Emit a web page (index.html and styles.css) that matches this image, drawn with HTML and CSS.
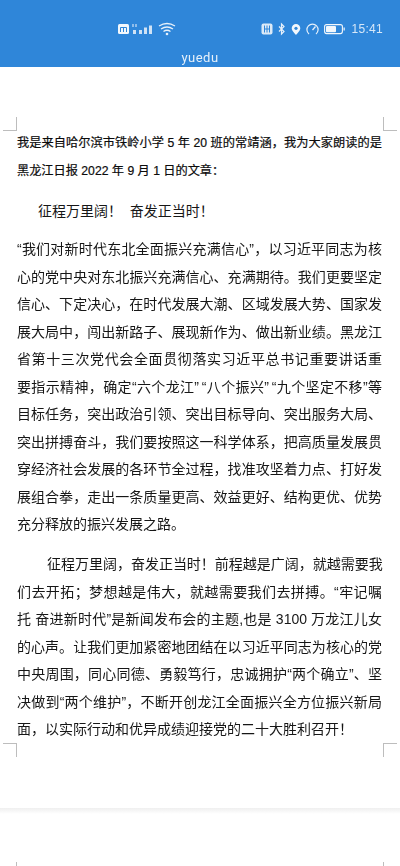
FILE: index.html
```html
<!DOCTYPE html>
<html lang="zh">
<head>
<meta charset="utf-8">
<title>yuedu</title>
<link rel="stylesheet" href="styles.css">
</head>
<body>
<header class="appbar">
  <div class="status">
    <div class="status-left">
      <svg class="ic" width="58" height="14" viewBox="0 0 58 14"><rect x="0" y="2" width="11" height="10" rx="1.500" fill="#f2f7fc"/><path d="M2.500 10V5.500M5.500 10V5.500M8.500 10V5.500M2.500 5.500h6" stroke="#2f86d9" stroke-width="1" fill="none"/><path d="M15 2v3M18 2v3" stroke="#cfe2f5" stroke-width="1.200"/><path d="M15 8h3v4h-3zM21 8h3v4h-3zM26 5.500h3V12h-3zM31 3.500h3V12h-3z" fill="#cfe2f5"/><path d="M41 4q8-5 16 0M43 7q6-4 12 0M45.500 9.500q3.500-2.500 7 0" stroke="#e6f0fa" stroke-width="1.300" fill="none"/><circle cx="49" cy="12" r="1.300" fill="#e6f0fa"/></svg>
    </div>
    <div class="status-right">
      <svg class="ic" width="12" height="14" viewBox="0 0 12 14"><rect x=".5" y="1.500" width="11" height="11" rx="2" fill="#dbe9f7"/><path d="M3.500 3.500v7M6 3.500v7M8.500 3.500v7M3.500 7h5" stroke="#2f86d9" stroke-width="1"/></svg>
      <svg class="ic" width="8" height="14" viewBox="0 0 8 14"><path d="M1 4.500l5 5-2.500 2.500V2L6 4.500l-5 5" stroke="#e6f0fa" stroke-width="1.200" fill="none"/></svg>
      <svg class="ic" width="10" height="14" viewBox="0 0 10 14"><path d="M5 2a4.300 4.300 0 0 1 4.300 4.300C9.300 9 5 13 5 13S.7 9 .7 6.300A4.300 4.300 0 0 1 5 2z" fill="#f2f7fc"/><circle cx="5" cy="6.300" r="1.600" fill="#2f86d9"/></svg>
      <svg class="ic" width="13" height="14" viewBox="0 0 13 14"><path d="M3 12a5.600 5.600 0 1 1 7 0" stroke="#e6f0fa" stroke-width="1.200" fill="none"/><path d="M6.500 8L9.500 4.500" stroke="#e6f0fa" stroke-width="1.300"/></svg>
      <svg class="ic" width="21" height="14" viewBox="0 0 21 14"><rect x=".6" y="2.600" width="17.800" height="9" rx="2" stroke="#f2f7fc" stroke-width="1.100" fill="none"/><rect x="2" y="4" width="10" height="6.200" rx="1" fill="#f2f7fc"/><rect x="19.500" y="5.500" width="1.300" height="3" fill="#e6f0fa"/></svg>
      <span class="clock">15:41</span>
    </div>
  </div>
  <div class="app-title">yuedu</div>
</header>

<main class="doc">
  <section class="page">
    <i class="mark tl"></i><i class="mark tr"></i><i class="mark bl"></i><i class="mark br"></i>
    <div class="intro">
      <span class="jl">我是来自哈尔滨市铁岭小学 5 年 20 班的常靖涵，我为大家朗读的是</span>
      <span class="ln">黑龙江日报 2022 年 9 月 1 日的文章：</span>
    </div>
    <h1 class="heading">征程万里阔！&nbsp;&nbsp;奋发正当时！</h1>
    <p class="para">
      <span class="jl">“我们对新时代东北全面振兴充满信心”，以习近平同志为核</span>
      <span class="jl">心的党中央对东北振兴充满信心、充满期待。我们更要坚定</span>
      <span class="jl">信心、下定决心，在时代发展大潮、区域发展大势、国家发</span>
      <span class="jl">展大局中，闯出新路子、展现新作为、做出新业绩。黑龙江</span>
      <span class="jl">省第十三次党代会全面贯彻落实习近平总书记重要讲话重</span>
      <span class="jl">要指示精神，确定“六个龙江”&#8201;“八个振兴”&#8201;“九个坚定不移”等</span>
      <span class="jl">目标任务，突出政治引领、突出目标导向、突出服务大局、</span>
      <span class="jl">突出拼搏奋斗，我们要按照这一科学体系，把高质量发展贯</span>
      <span class="jl">穿经济社会发展的各环节全过程，找准攻坚着力点、打好发</span>
      <span class="jl">展组合拳，走出一条质量更高、效益更好、结构更优、优势</span>
      <span class="ln">充分释放的振兴发展之路。</span>
    </p>
    <p class="para second">
      <span class="jl first">征程万里阔，奋发正当时！前程越是广阔，就越需要我</span>
      <span class="jl">们去开拓；梦想越是伟大，就越需要我们去拼搏。“牢记嘱</span>
      <span class="jl">托 奋进新时代”是新闻发布会的主题,也是 3100 万龙江儿女</span>
      <span class="jl">的心声。让我们更加紧密地团结在以习近平同志为核心的党</span>
      <span class="jl">中央周围，同心同德、勇毅笃行，忠诚拥护“两个确立”、坚</span>
      <span class="jl">决做到“两个维护”，不断开创龙江全面振兴全方位振兴新局</span>
      <span class="ln">面，以实际行动和优异成绩迎接党的二十大胜利召开！</span>
    </p>
  </section>
  <section class="page next">
    <i class="mark tl"></i><i class="mark tr"></i>
  </section>
</main>
</body>
</html>
```
FILE: styles.css
```css
* { box-sizing: border-box; }
html, body { margin: 0; padding: 0; }
body {
  width: 400px;
  height: 866px;
  overflow: hidden;
  background: #fff;
  font-family: "Liberation Sans", "Noto Sans CJK SC", sans-serif;
}
.appbar {
  height: 67px;
  background: #2f86d9;
  color: #fff;
  display: flex;
  flex-direction: column;
}
.status {
  height: 50px;
  padding: 8px 17px 0 118px;
  display: flex;
  justify-content: space-between;
  align-items: center;
  filter: blur(.4px);
}
.status-left, .status-right { display: flex; align-items: center; gap: 5px; }
.ic { display: block; }
.clock { font-size: 12px; letter-spacing: .3px; color: #d6e7f8; margin-left: 1px; }
.app-title {
  text-align: center;
  font-size: 13px;
  line-height: 16px;
  letter-spacing: .5px;
  color: #e6f0fa;
  font-family: "Roboto", sans-serif;
  filter: blur(.3px);
}
.page {
  position: relative;
  background: #fff;
  height: 741px;
  padding: 62px 18px 0 17px;
  color: #161616;
  font-size: 14px;
  line-height: 27.500px;
}
.page.next {
  height: 60px;
  padding: 0;
  background: linear-gradient(#efefef, #fff 6px);
}
.mark {
  position: absolute;
  width: 14px;
  height: 14px;
  border: 0 solid #bdbdbd;
}
.mark.tl { left: 3px; top: 50px; border-width: 0 1px 1px 0; }
.mark.tr { right: 3px; top: 50px; border-width: 0 0 1px 1px; }
.mark.bl { left: 3px; top: 676px; border-width: 1px 1px 0 0; }
.mark.br { right: 3px; top: 676px; border-width: 1px 0 0 1px; }
.next .mark.tl { top: 54px; border-width: 0 1px 0 0; }
.next .mark.tr { top: 54px; border-width: 0 0 0 1px; }
.intro {
  font-size: 12.200px;
  line-height: 28px;
  color: #0c0c0c;
  -webkit-text-stroke: .2px #0c0c0c;
}
.heading {
  margin: 0;
  font-size: 14px;
  font-weight: 400;
  line-height: 28px;
  padding: 12px 0 0 21px;
}
.para { margin: 11px 0 0; filter: blur(.25px); }
.para.second { margin-top: 12.500px; }
.jl, .ln { display: block; white-space: nowrap; }
.jl { text-align: justify; text-align-last: justify; white-space: normal; }
.first { padding-left: 30px; letter-spacing: -.7px; }
```
